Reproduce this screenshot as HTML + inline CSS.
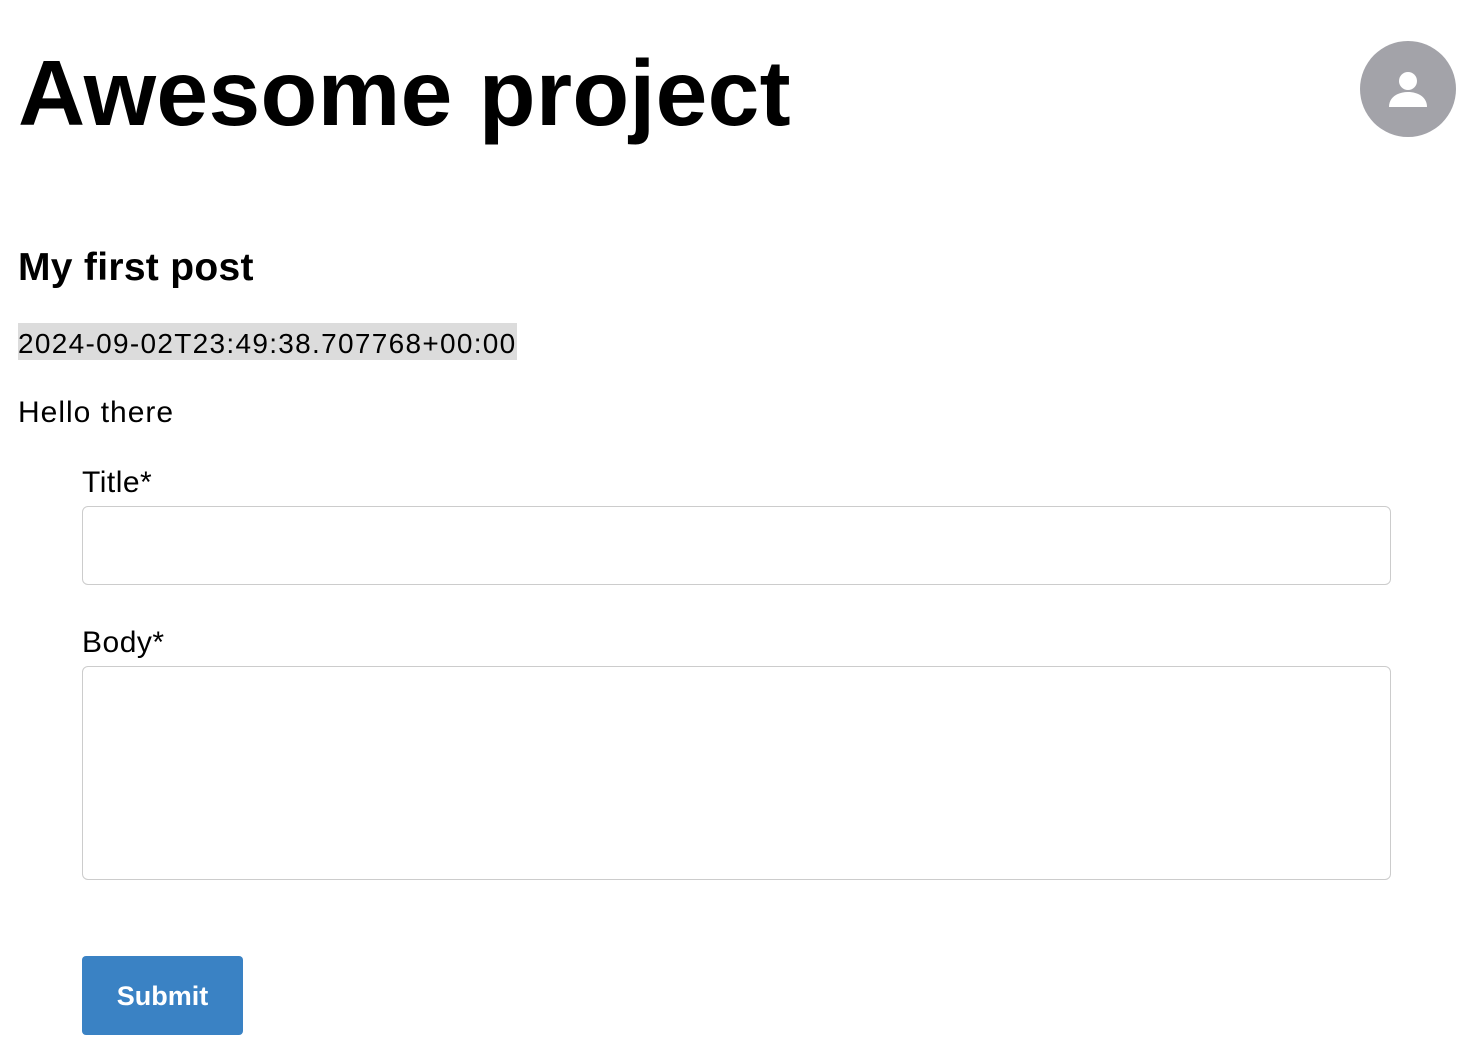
<!DOCTYPE html>
<html><head><style>
body{margin:0;width:1474px;height:1052px;background:#fff;font-family:"Liberation Sans",sans-serif;color:#000;position:relative;overflow:hidden}
.a{position:absolute;white-space:nowrap}
h1{position:absolute;left:18px;top:38px;margin:0;font-size:93px;font-weight:bold;letter-spacing:0.3px;line-height:110px}
.av{position:absolute;left:1360px;top:41px;width:96px;height:96px;border-radius:50%;background:#a3a3a9}
.box{position:absolute;left:82px;width:1307px;border:1px solid #ccc;border-radius:6px}
.btn{position:absolute;left:82px;top:956px;width:161px;height:79px;background:#3a82c4;border-radius:4px;color:#fff;font-weight:bold;font-size:27px;line-height:81px;text-align:center}
</style></head><body>
<h1>Awesome project</h1>
<div class="av"><svg width="96" height="96" viewBox="0 0 96 96"><circle cx="48" cy="40" r="9" fill="#fff"/><path d="M29 66 C29 56 38 51 48 51 C58 51 67 56 67 66 Z" fill="#fff"/></svg></div>
<div class="a" style="left:18px;top:246px;font-size:39px;font-weight:bold;letter-spacing:0.3px">My first post</div>
<div class="a" style="left:18px;top:323px;height:37px;width:499px;background:#dcdcdc;font-size:28px;line-height:42px;letter-spacing:1.3px">2024-09-02T23:49:38.707768+00:00</div>
<div class="a" style="left:18px;top:396px;font-size:30px;letter-spacing:1px">Hello there</div>
<div class="a" style="left:82px;top:466px;font-size:30px;letter-spacing:0.5px">Title*</div>
<div class="box" style="top:506px;height:77px"></div>
<div class="a" style="left:82px;top:626px;font-size:30px;letter-spacing:0.5px">Body*</div>
<div class="box" style="top:666px;height:212px"></div>
<div class="btn">Submit</div>
</body></html>
